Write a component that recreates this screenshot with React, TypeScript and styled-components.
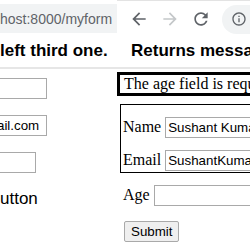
import React from "react";
import styled, { createGlobalStyle } from "styled-components";

const GlobalStyle = createGlobalStyle`
  html, body {
    margin: 0;
    padding: 0;
    background: #fff;
  }
  body {
    width: 250px;
    height: 248px;
    overflow: hidden;
  }
`;

const Page = styled.div`
  display: flex;
  width: 250px;
  height: 248px;
  overflow: hidden;
  background: #fff;
  font-family: "Liberation Sans", Arial, sans-serif;
`;

const Pane = styled.div<{ $width?: number }>`
  display: flex;
  flex-direction: column;
  flex: ${(p) => (p.$width ? `0 0 ${p.$width}px` : "1 1 auto")};
  min-width: 0;
  overflow: hidden;
`;

const Toolbar = styled.div<{ $pad: number; $topLine?: boolean }>`
  display: flex;
  align-items: center;
  gap: 11px;
  height: 36px;
  box-sizing: border-box;
  padding: 4px 0 3px ${(p) => p.$pad}px;
  border-top: ${(p) => (p.$topLine ? "1px solid #e3e3e3" : "none")};
`;

const Omnibox = styled.div<{ $round?: boolean }>`
  display: flex;
  align-items: center;
  flex: 1 0 auto;
  height: 29px;
  padding-left: ${(p) => (p.$round ? "9px" : "0")};
  background: #f1f3f4;
  border-radius: ${(p) => (p.$round ? "15px 0 0 15px" : "0")};
  color: #5f6368;
  font-size: 14px;
  white-space: nowrap;
  overflow: hidden;
`;

const NavIcon = styled.svg<{ $dim?: boolean; $size?: number }>`
  flex: 0 0 auto;
  width: ${(p) => p.$size ?? 20}px;
  height: ${(p) => p.$size ?? 20}px;
  fill: ${(p) => (p.$dim ? "#c4c7c9" : "#5f6368")};
`;

const Heading = styled.div<{ $pad: number }>`
  padding: 5px 0 6px ${(p) => p.$pad}px;
  border-bottom: 2px solid #e6e6e6;
  font-size: 17px;
  font-weight: bold;
  line-height: 20px;
  color: #000;
  white-space: nowrap;
  overflow: hidden;
`;

const LeftBody = styled.div`
  display: flex;
  flex-direction: column;
  align-items: flex-start;
  gap: 16px;
  padding-top: 9px;
`;

const TextBox = styled.input<{ $width: number; $cut?: boolean }>`
  flex: 0 0 auto;
  width: ${(p) => p.$width}px;
  height: 21px;
  box-sizing: border-box;
  margin: 0;
  padding: 1px 2px;
  border: 1px solid #a9a9a9;
  border-left: ${(p) => (p.$cut ? "none" : "1px solid #a9a9a9")};
  padding-left: ${(p) => (p.$cut ? "0" : "2px")};
  text-indent: ${(p) => (p.$cut ? "-3px" : "0")};
  background: #fff;
  color: #000;
  font-family: "Liberation Sans", Arial, sans-serif;
  font-size: 13.33px;
  outline: none;
`;

const ButtonText = styled.div`
  font-size: 17px;
  line-height: 20px;
  color: #000;
`;

const RightBody = styled.div`
  display: flex;
  flex-direction: column;
  align-items: flex-start;
  font-family: "Liberation Serif", "Times New Roman", serif;
  font-size: 16px;
  color: #000;
`;

const ErrorBox = styled.div`
  flex: 0 0 auto;
  width: 200px;
  margin-top: 3px;
  padding: 0 4px;
  border: 3px solid #000;
  line-height: 18px;
  white-space: nowrap;
`;

const FormBox = styled.div`
  display: flex;
  flex-direction: column;
  gap: 12px;
  flex: 0 0 auto;
  width: 200px;
  margin: 8px 0 0 3px;
  padding: 12px 0 1px 2px;
  border: 1px solid #000;
`;

const Field = styled.label<{ $indent?: number; $top?: number }>`
  display: flex;
  align-items: baseline;
  gap: 4px;
  margin-left: ${(p) => p.$indent ?? 0}px;
  margin-top: ${(p) => p.$top ?? 0}px;
  white-space: nowrap;
`;

const SubmitButton = styled.button`
  margin: 15px 0 0 7px;
  height: 21px;
  padding: 0 6px;
  border: 1px solid #a9a9a9;
  border-radius: 2px;
  background: #efefef;
  color: #000;
  font-family: "Liberation Sans", Arial, sans-serif;
  font-size: 13.33px;
`;

const App = () => {
  return (
    <Page>
      <GlobalStyle />
      <Pane $width={117}>
        <Toolbar $pad={0}>
          <Omnibox>host:8000/myform</Omnibox>
        </Toolbar>
        <Heading $pad={0}>left third one.</Heading>
        <LeftBody>
          <TextBox $width={47} $cut readOnly defaultValue="" />
          <TextBox $width={47} $cut readOnly defaultValue="ail.com" />
          <TextBox $width={36} $cut readOnly defaultValue="" />
          <ButtonText>utton</ButtonText>
        </LeftBody>
      </Pane>
      <Pane>
        <Toolbar $pad={12} $topLine>
          <NavIcon viewBox="0 0 24 24">
            <path d="M20 11H7.83l5.59-5.59L12 4l-8 8 8 8 1.41-1.41L7.83 13H20v-2z" />
          </NavIcon>
          <NavIcon viewBox="0 0 24 24" $dim>
            <path d="M12 4l-1.41 1.41L16.17 11H4v2h12.17l-5.58 5.59L12 20l8-8z" />
          </NavIcon>
          <NavIcon viewBox="0 0 24 24">
            <path d="M17.65 6.35C16.2 4.9 14.21 4 12 4c-4.42 0-7.99 3.58-7.99 8s3.57 8 7.99 8c3.73 0 6.84-2.55 7.73-6h-2.08c-.82 2.33-3.04 4-5.65 4-3.31 0-6-2.69-6-6s2.69-6 6-6c1.66 0 3.14.69 4.22 1.78L13 11h7V4l-2.35 2.35z" />
          </NavIcon>
          <Omnibox $round>
            <NavIcon viewBox="0 0 24 24" $size={16}>
              <path d="M11 7h2v2h-2zm0 4h2v6h-2zm1-9C6.48 2 2 6.48 2 12s4.48 10 10 10 10-4.48 10-10S17.52 2 12 2zm0 18c-4.41 0-8-3.59-8-8s3.59-8 8-8 8 3.59 8 8-3.59 8-8 8z" />
            </NavIcon>
          </Omnibox>
        </Toolbar>
        <Heading $pad={14}>Returns message</Heading>
        <RightBody>
          <ErrorBox>The age field is required.</ErrorBox>
          <FormBox>
            <Field>
              Name
              <TextBox $width={150} readOnly defaultValue="Sushant Kumar" />
            </Field>
            <Field>
              Email
              <TextBox $width={150} readOnly defaultValue="SushantKumar@gmail.com" />
            </Field>
          </FormBox>
          <Field $indent={6} $top={12}>
            Age
            <TextBox $width={150} readOnly defaultValue="" />
          </Field>
          <SubmitButton type="button">Submit</SubmitButton>
        </RightBody>
      </Pane>
    </Page>
  );
};

export default App;
